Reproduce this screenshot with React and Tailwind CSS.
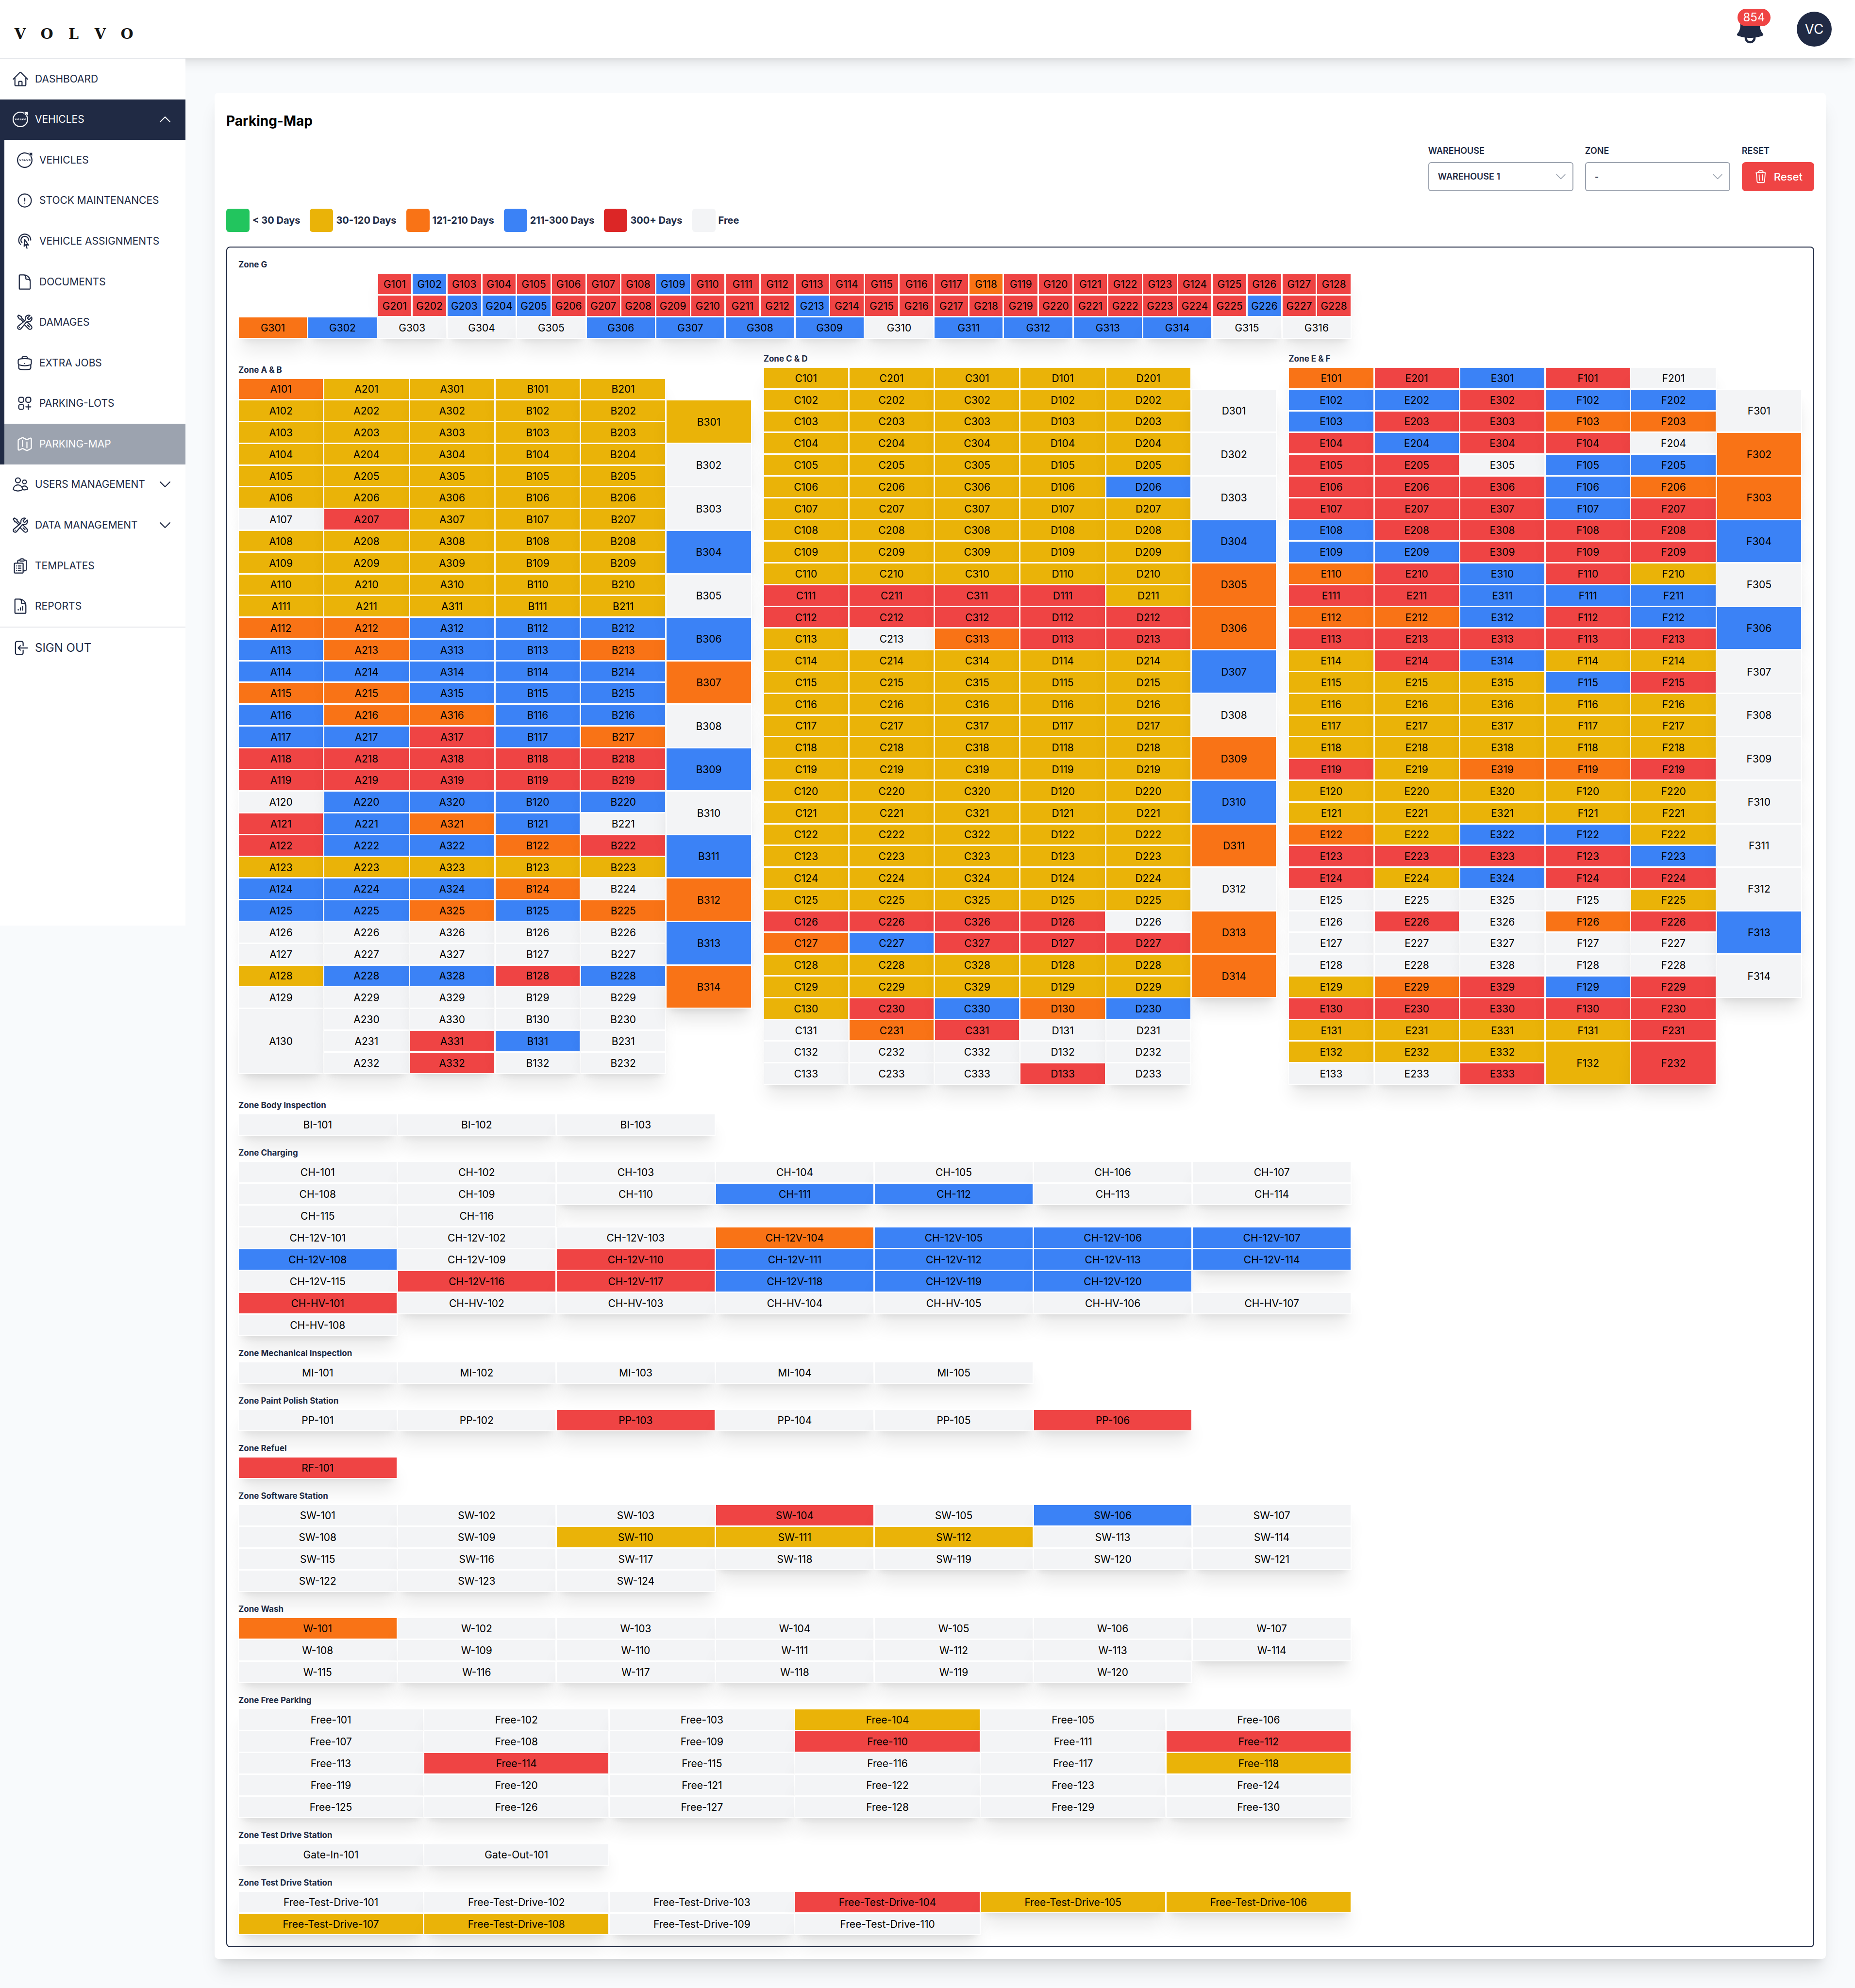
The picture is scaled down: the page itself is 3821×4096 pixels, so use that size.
import {
  HiBell,
  HiOutlineArrowLeftOnRectangle,
  HiOutlineBriefcase,
  HiOutlineChevronDown,
  HiOutlineChevronUp,
  HiOutlineClipboardDocumentList,
  HiOutlineCursorArrowRipple,
  HiOutlineDocument,
  HiOutlineDocumentChartBar,
  HiOutlineExclamationCircle,
  HiOutlineHome,
  HiOutlineMap,
  HiOutlineSquaresPlus,
  HiOutlineTrash,
  HiOutlineUsers,
  HiOutlineWrenchScrewdriver,
} from "react-icons/hi2";
import { SiVolvo } from "react-icons/si";

const TONES = {
  y: "bg-[#eab308]",
  r: "bg-[#ef4444]",
  o: "bg-[#f97316]",
  b: "bg-[#3b82f6]",
  g: "bg-[#f3f4f6]",
};

const LEGEND = [
  ["bg-[#22c55e]", "< 30 Days"],
  ["bg-[#eab308]", "30-120 Days"],
  ["bg-[#f97316]", "121-210 Days"],
  ["bg-[#3b82f6]", "211-300 Days"],
  ["bg-[#dc2626]", "300+ Days"],
  ["bg-[#f3f4f6]", "Free"],
];

/* Turns a run of tone letters into numbered slots: slots("A", 101, "oy") -> A101, A102 */
function slots(prefix, first, tones) {
  return tones.split("").map((tone, i) => ({ name: `${prefix}${first + i}`, tone }));
}

function Slot({ name, tone, className = "" }) {
  return (
    <div
      className={`flex items-center justify-center border-t border-r-2 border-b-2 border-l border-white pt-0.5 text-[21px] leading-6 text-black shadow-[0_30px_37px_-7px_rgb(0_0_0/0.1),0_12px_15px_-9px_rgb(0_0_0/0.1)] ${TONES[tone]} ${className}`}
    >
      {name}
    </div>
  );
}

function ZoneTitle({ children }) {
  return <h2 className="mb-1.5 text-[17px] leading-6 font-bold text-[#202a44]">{children}</h2>;
}

const G_ROWS = [
  slots("G", 101, "rbrrrrrrbrrrrrrrrorrrrrrrrrr"),
  slots("G", 201, "rrbbbrrrrrrrbrrrrrrrrrrrrbrr"),
];
const G_LAST = slots("G", 301, "obgggbbbbgbbbbgg");

function ZoneG() {
  return (
    <section>
      <ZoneTitle>Zone G</ZoneTitle>
      <div className="grid w-full max-w-[2293px] auto-rows-[45px] grid-cols-32">
        {G_ROWS.map((row) =>
          row.map((s, i) => <Slot key={s.name} {...s} className={i === 0 ? "col-start-5" : ""} />)
        )}
        {G_LAST.map((s) => (
          <Slot key={s.name} {...s} className="col-span-2" />
        ))}
      </div>
    </section>
  );
}

/* Each word in rows is one line of slots, one letter per column; a dot is covered by a taller slot above. */
const BIG_ZONES = [
  {
    title: "Zone A & B",
    grid: "grid-rows-32 h-[1433px]",
    heads: [["A", 101], ["A", 201], ["A", 301], ["B", 101], ["B", 201]],
    rows:
      "oyyyy yyyyy yyyyy yyyyy yyyyy yyyyy gryyy yyyyy yyyyy yyyyy yyyyy " +
      "oobbb bobbo bbbbb oobbb boobb bbrbo rrrrr rrrrr gbbbb rbobg rbbor " +
      "yyyyy bbbog bbobo ggggg ggggg ybbrb ggggg ggggg .grbg .grgg",
    bays: ["B", 301, "yggbgbogbgbobo"],
    spans: { A130: "row-span-3" },
  },
  {
    title: "Zone C & D",
    grid: "grid-rows-33 h-[1478px]",
    heads: [["C", 101], ["C", 201], ["C", 301], ["D", 101], ["D", 201]],
    rows:
      "yyyyy yyyyy yyyyy yyyyy yyyyy yyyyb yyyyy yyyyy yyyyy yyyyy rrrry " +
      "rrrrr ygorr yyyyy yyyyy yyyyy yyyyy yyyyy yyyyy yyyyy yyyyy yyyyy " +
      "yyyyy yyyyy yyyyy rrrrg obrrr yyyyy yyyyy yrbob gorgg ggggg gggrg",
    bays: ["D", 301, "gggboobgobogoo"],
    spans: {},
  },
  {
    title: "Zone E & F",
    grid: "grid-rows-33 h-[1478px]",
    heads: [["E", 101], ["E", 201], ["E", 301], ["F", 101], ["F", 201]],
    rows:
      "orbrg bbrbb brroo rbrrg rrgbb rrrbo rrrbr brrrr bbrrr orbry rrbbb " +
      "oobrb rrrrr yrbyy yyybr yyyyy yyyyy yyyyy ryoor yyyyy yyyyy oybby " +
      "rrrrb rybrr ggggy grgor ggggg ggggg yorbr rrrrr yyyyr yyyyr ggr..",
    bays: ["F", 301, "goobgbggggggbg"],
    spans: { F132: "row-span-2", F232: "row-span-2" },
  },
];

function BigZone({ title, grid, heads, rows, bays, spans }) {
  const lines = rows.split(" ");
  const cells = heads.flatMap(([prefix, first], column) =>
    slots(prefix, first, lines.map((line) => line[column]).join("")).filter((s) => s.tone !== ".")
  );
  return (
    <section>
      <ZoneTitle>{title}</ZoneTitle>
      <div className={`grid grid-flow-col grid-cols-6 ${grid}`}>
        {cells.map((s) => (
          <Slot key={s.name} {...s} className={spans[s.name]} />
        ))}
        {slots(...bays).map((s, i) => (
          <Slot
            key={s.name}
            {...s}
            className={i === 0 ? "col-start-6 row-span-2 row-start-2" : "col-start-6 row-span-2"}
          />
        ))}
      </div>
    </section>
  );
}

const SMALL_ZONES = [
  { title: "Zone Body Inspection", cols: 7, groups: [["BI-", 101, "ggg"]] },
  {
    title: "Zone Charging",
    cols: 7,
    groups: [
      ["CH-", 101, "ggggggggggbbgggg"],
      ["CH-12V-", 101, "gggobbbbgrbbbbgrrbbb"],
      ["CH-HV-", 101, "rggggggg"],
    ],
  },
  { title: "Zone Mechanical Inspection", cols: 7, groups: [["MI-", 101, "ggggg"]] },
  { title: "Zone Paint Polish Station", cols: 7, groups: [["PP-", 101, "ggrggr"]] },
  { title: "Zone Refuel", cols: 7, groups: [["RF-", 101, "r"]] },
  { title: "Zone Software Station", cols: 7, groups: [["SW-", 101, "gggrgbgggyyygggggggggggg"]] },
  { title: "Zone Wash", cols: 7, groups: [["W-", 101, "oggggggggggggggggggg"]] },
  { title: "Zone Free Parking", cols: 6, groups: [["Free-", 101, "gggygggggrgrgrgggygggggggggggg"]] },
  {
    title: "Zone Test Drive Station",
    cols: 6,
    names: [
      { name: "Gate-In-101", tone: "g" },
      { name: "Gate-Out-101", tone: "g" },
    ],
  },
  { title: "Zone Test Drive Station", cols: 6, groups: [["Free-Test-Drive-", 101, "gggryyyygg"]] },
];

function SmallZone({ title, cols, groups, names }) {
  const sets = names ? [names] : groups.map((g) => slots(...g));
  return (
    <section>
      <ZoneTitle>{title}</ZoneTitle>
      {sets.map((set) => (
        <div
          key={set[0].name}
          className={`grid w-full max-w-[2293px] auto-rows-[45px] ${cols === 7 ? "grid-cols-7" : "grid-cols-6"}`}
        >
          {set.map((s) => (
            <Slot key={s.name} {...s} />
          ))}
        </div>
      ))}
    </section>
  );
}

function NavItem({ icon: Icon, label, chevron: Chevron, brand, tone = "" }) {
  return (
    <a href="#" className={`flex items-center gap-3 pr-[26px] pl-6 text-[21px] leading-7 ${tone}`}>
      <span className="flex size-9 shrink-0 items-center justify-center">
        <Icon className={brand ? "size-8" : "size-9"} />
      </span>
      <span className="flex-1 whitespace-nowrap">{label}</span>
      {Chevron && <Chevron className="size-8 shrink-0" />}
    </a>
  );
}

function Sidebar() {
  return (
    <aside className="relative z-20 min-h-[1788px] w-[382px] shrink-0 self-start border-t-2 border-gray-200 bg-white text-[#202a44]">
      <nav className="grid h-[1170px] grid-rows-14">
        <NavItem icon={HiOutlineHome} label="DASHBOARD" />
        <NavItem icon={SiVolvo} brand label="VEHICLES" chevron={HiOutlineChevronUp} tone="bg-[#202a44] text-white" />
        <div className="row-span-8 grid grid-rows-subgrid border-l-[9px] border-[#202a44]">
          <NavItem icon={SiVolvo} brand label="VEHICLES" />
          <NavItem icon={HiOutlineExclamationCircle} label="STOCK MAINTENANCES" />
          <NavItem icon={HiOutlineCursorArrowRipple} label="VEHICLE ASSIGNMENTS" />
          <NavItem icon={HiOutlineDocument} label="DOCUMENTS" />
          <NavItem icon={HiOutlineWrenchScrewdriver} label="DAMAGES" />
          <NavItem icon={HiOutlineBriefcase} label="EXTRA JOBS" />
          <NavItem icon={HiOutlineSquaresPlus} label="PARKING-LOTS" />
          <NavItem icon={HiOutlineMap} label="PARKING-MAP" tone="bg-[#9ca3af] text-white" />
        </div>
        <NavItem icon={HiOutlineUsers} label="USERS MANAGEMENT" chevron={HiOutlineChevronDown} />
        <NavItem icon={HiOutlineWrenchScrewdriver} label="DATA MANAGEMENT" chevron={HiOutlineChevronDown} />
        <NavItem icon={HiOutlineClipboardDocumentList} label="TEMPLATES" />
        <NavItem icon={HiOutlineDocumentChartBar} label="REPORTS" />
      </nav>
      <button
        type="button"
        className="flex h-[86px] w-full items-center gap-3 border-t-2 border-gray-200 px-6 text-2xl"
      >
        <HiOutlineArrowLeftOnRectangle className="size-9" />
        SIGN OUT
      </button>
    </aside>
  );
}

function Header() {
  return (
    <header className="relative z-10 flex h-[119px] items-center justify-between bg-white pr-12 pl-3.5 shadow-[0_15px_22px_-4px_rgb(0_0_0/0.1),0_6px_9px_-6px_rgb(0_0_0/0.1)]">
      <a
        href="#"
        aria-label="Volvo"
        className="mt-5 flex text-center font-['DejaVu_Serif',serif] text-3xl leading-8 font-bold text-[#141414]"
      >
        {["V", "O", "L", "V", "O"].map((letter, i) => (
          <span key={i} className="w-[55px]">
            {letter}
          </span>
        ))}
      </a>
      <div className="flex items-center gap-[60px]">
        <button type="button" aria-label="Notifications" className="relative text-[#202a44]">
          <HiBell className="size-[72px]" />
          <span className="absolute -top-1.5 left-2.5 flex h-9 w-[68px] items-center justify-center rounded-full bg-[#ef4444] text-2xl text-white">
            854
          </span>
        </button>
        <button
          type="button"
          className="flex size-[72px] items-center justify-center rounded-full bg-[#202a44] text-[28px] text-white"
        >
          VC
        </button>
      </div>
    </header>
  );
}

function SelectField({ id, label, option }) {
  return (
    <div className="w-[299px]">
      <label htmlFor={id} className="mb-[11px] block text-lg leading-6 font-semibold">
        {label}
      </label>
      <div className="relative">
        <select
          id={id}
          className="h-[60px] w-full appearance-none rounded-md border-2 border-[#9ca3af] bg-white pr-12 pl-[18px] text-lg font-semibold"
        >
          <option>{option}</option>
        </select>
        <HiOutlineChevronDown className="pointer-events-none absolute top-4 right-3 size-7 text-[#9ca3af]" />
      </div>
    </div>
  );
}

function Filters() {
  return (
    <form className="mt-8 flex justify-end gap-6 text-[#202a44]">
      <SelectField id="warehouse" label="WAREHOUSE" option="WAREHOUSE 1" />
      <SelectField id="zone" label="ZONE" option="-" />
      <div>
        <label htmlFor="reset" className="mb-[11px] block text-lg leading-6 font-semibold">
          RESET
        </label>
        <button
          id="reset"
          type="button"
          className="flex h-[60px] items-center gap-3 rounded-lg bg-[#ef4444] px-6 text-[22px] font-medium text-white"
        >
          <HiOutlineTrash className="size-[30px]" />
          Reset
        </button>
      </div>
    </form>
  );
}

export default function App() {
  return (
    <div className="min-h-screen bg-[#f8fafc] font-[Inter,sans-serif]">
      <Header />
      <div className="flex">
        <Sidebar />
        <main className="min-w-0 flex-1 px-[60px] pt-[72px] pb-[60px]">
          <div className="rounded-lg bg-white px-6 pt-10 pb-6 shadow-[0_30px_37px_-7px_rgb(0_0_0/0.1),0_12px_15px_-9px_rgb(0_0_0/0.1)]">
            <h1 className="text-[28px] leading-9 font-bold text-black">Parking-Map</h1>
            <Filters />
            <ul className="mt-9 flex gap-5 text-xl font-bold text-[#202a44]">
              {LEGEND.map(([swatch, label]) => (
                <li key={label} className="flex items-center gap-1.5">
                  <span className={`size-12 rounded-md ${swatch}`} />
                  {label}
                </li>
              ))}
            </ul>
            <div className="mt-[30px] flex flex-col gap-[23px] rounded-lg border-2 border-[#202a44] p-[23px]">
              <ZoneG />
              <div className="mt-1.5 mb-[7px] grid grid-cols-3 items-center gap-6">
                {BIG_ZONES.map((zone) => (
                  <BigZone key={zone.title} {...zone} />
                ))}
              </div>
              {SMALL_ZONES.map((zone, i) => (
                <SmallZone key={i} {...zone} />
              ))}
            </div>
          </div>
        </main>
      </div>
    </div>
  );
}
